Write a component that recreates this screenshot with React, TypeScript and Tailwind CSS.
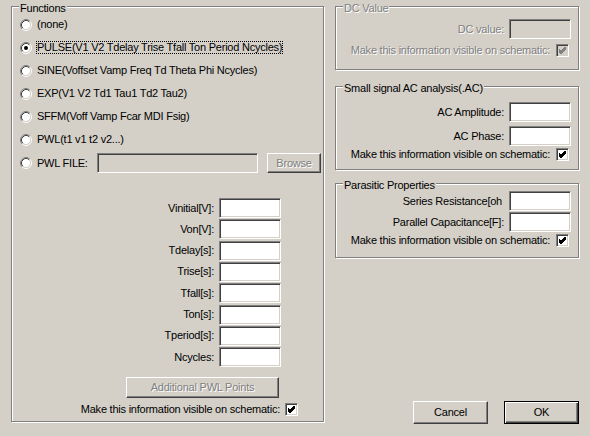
import React from 'react';

const sunken =
  'border border-t-[#808080] border-l-[#808080] border-b-white border-r-white shadow-[inset_1px_1px_#404040,inset_-1px_-1px_#d4d0c8]';
const raised =
  'border border-t-white border-l-white border-b-[#404040] border-r-[#404040] shadow-[inset_-1px_-1px_#808080]';
const grayText = 'text-[#808080] [text-shadow:1px_1px_#fff]';

const Radio: React.FC<{ checked?: boolean }> = ({ checked }) => (
  <svg width="12" height="12" viewBox="0 0 12 12" className="shrink-0">
    <circle cx="6" cy="6" r="4.5" fill="#fff" />
    <path d="M2.11 9.89 A5.5 5.5 0 0 1 9.89 2.11" stroke="#808080" fill="none" />
    <path d="M9.89 2.11 A5.5 5.5 0 0 1 2.11 9.89" stroke="#fff" fill="none" />
    <path d="M2.82 9.18 A4.5 4.5 0 0 1 9.18 2.82" stroke="#404040" fill="none" />
    <path d="M9.18 2.82 A4.5 4.5 0 0 1 2.82 9.18" stroke="#d4d0c8" fill="none" />
    {checked && <circle cx="6" cy="6" r="2" fill="#000" />}
  </svg>
);

const Check: React.FC<{ disabled?: boolean }> = ({ disabled }) => (
  <div className={`w-[13px] h-[13px] shrink-0 ${sunken} ${disabled ? 'bg-[#d4d0c8]' : 'bg-white'}`}>
    <svg width="11" height="11" viewBox="0 0 11 11" className="block">
      <path
        d="M2 4.5 L4 6.5 L8.5 2 M2 5.5 L4 7.5 L8.5 3 M2 6.5 L4 8.5 L8.5 4"
        stroke={disabled ? '#808080' : '#000'}
        strokeWidth="1"
        fill="none"
        shapeRendering="crispEdges"
      />
    </svg>
  </div>
);

const Field: React.FC<{ disabled?: boolean }> = ({ disabled }) => (
  <div className={`w-[62px] h-[20px] shrink-0 ${sunken} ${disabled ? 'bg-[#d4d0c8]' : 'bg-white'}`} />
);

const Group: React.FC<{ title: string; disabled?: boolean; className?: string; children: React.ReactNode }> = ({
  title,
  disabled,
  className,
  children,
}) => (
  <div className={`relative border border-[#808080] shadow-[inset_1px_1px_#fff,1px_1px_#fff] ${className ?? ''}`}>
    <span
      className={`absolute left-[7px] -top-[5px] bg-[#d4d0c8] px-px leading-[13px] ${disabled ? grayText : ''}`}
    >
      {title}
    </span>
    {children}
  </div>
);

const functions = [
  '(none)',
  'PULSE(V1 V2 Tdelay Trise Tfall Ton Period Ncycles)',
  'SINE(Voffset Vamp Freq Td Theta Phi Ncycles)',
  'EXP(V1 V2 Td1 Tau1 Td2 Tau2)',
  'SFFM(Voff Vamp Fcar MDI Fsig)',
  'PWL(t1 v1 t2 v2...)',
];

const params = ['Vinitial[V]:', 'Von[V]:', 'Tdelay[s]:', 'Trise[s]:', 'Tfall[s]:', 'Ton[s]:', 'Tperiod[s]:', 'Ncycles:'];

export default function App() {
  return (
    <div className="w-[590px] h-[436px] bg-[#d4d0c8] flex items-start pt-[6px] pl-[11px] font-['Liberation_Sans',Arial,sans-serif] text-[11px] tracking-[-0.23px] text-black leading-[13px] overflow-hidden">
      <Group title="Functions" className="w-[313px] h-[416px] shrink-0">
        <div className="pt-[6px] pl-[8px]">
          {functions.map((f, i) => (
            <div key={f} className="h-[23px] flex items-center">
              <Radio checked={i === 1} />
              {i === 1 ? (
                <span className="ml-[4px] border border-dotted border-black leading-[11px] whitespace-nowrap">{f}</span>
              ) : (
                <span className="ml-[5px] whitespace-nowrap">{f}</span>
              )}
            </div>
          ))}
          <div className="mt-[2px] h-[20px] flex items-center">
            <Radio />
            <span className="ml-[5px] w-[60px]">PWL FILE:</span>
            <div className={`w-[161px] h-[20px] bg-[#d4d0c8] ${sunken}`} />
            <div className={`ml-[9px] w-[54px] h-[20px] flex items-center justify-center ${raised} ${grayText}`}>
              Browse
            </div>
          </div>

          <div className="mt-[25px] flex flex-col gap-[1.33px]">
            {params.map((p) => (
              <div key={p} className="flex items-center">
                <span className="w-[194px] text-right">{p}</span>
                <div className="ml-[5px]">
                  <Field />
                </div>
              </div>
            ))}
          </div>

          <div
            className={`mt-[10px] ml-[106px] w-[153px] h-[21px] flex items-center justify-center ${raised} ${grayText}`}
          >
            Additional PWL Points
          </div>

          <div className="mt-[5px] w-[278px] flex items-center justify-end">
            <span>Make this information visible on schematic:</span>
            <div className="ml-[5px]">
              <Check />
            </div>
          </div>
        </div>
      </Group>

      <div className="ml-[11px] w-[244px] h-[418px] flex flex-col">
        <Group title="DC Value" disabled className="h-[64px]">
          <div className="mt-[12px] pr-[7px] flex items-center justify-end">
            <span className={grayText}>DC value:</span>
            <div className="ml-[5px]">
              <Field disabled />
            </div>
          </div>
          <div className="mt-[5px] pr-[9px] flex items-center justify-end">
            <span className={grayText}>Make this information visible on schematic:</span>
            <div className="ml-[6px]">
              <Check disabled />
            </div>
          </div>
        </Group>

        <Group title="Small signal AC analysis(.AC)" className="mt-[16px] h-[84px]">
          <div className="mt-[15px] pr-[7px] flex items-center justify-end">
            <span>AC Amplitude:</span>
            <div className="ml-[5px]">
              <Field />
            </div>
          </div>
          <div className="mt-[4px] pr-[7px] flex items-center justify-end">
            <span>AC Phase:</span>
            <div className="ml-[5px]">
              <Field />
            </div>
          </div>
          <div className="mt-[2px] pr-[9px] flex items-center justify-end">
            <span>Make this information visible on schematic:</span>
            <div className="ml-[6px]">
              <Check />
            </div>
          </div>
        </Group>

        <Group title="Parasitic Properties" className="mt-[13px] h-[75px]">
          <div className="mt-[7px] pr-[7px] flex items-center justify-end">
            <span>Series Resistance[oh</span>
            <div className="ml-[7px]">
              <Field />
            </div>
          </div>
          <div className="mt-px pr-[7px] flex items-center justify-end">
            <span>Parallel Capacitance[F]:</span>
            <div className="ml-[5px]">
              <Field />
            </div>
          </div>
          <div className="mt-[2px] pr-[9px] flex items-center justify-end">
            <span>Make this information visible on schematic:</span>
            <div className="ml-[6px]">
              <Check />
            </div>
          </div>
        </Group>

        <div className="mt-auto flex justify-end gap-[16px]">
          <button className={`w-[75px] h-[23px] bg-[#d4d0c8] ${raised}`}>Cancel</button>
          <button className="w-[75px] h-[23px] bg-[#d4d0c8] border border-black shadow-[inset_1px_1px_#fff,inset_-1px_-1px_#404040,inset_-2px_-2px_#808080]">
            OK
          </button>
        </div>
      </div>
    </div>
  );
}
